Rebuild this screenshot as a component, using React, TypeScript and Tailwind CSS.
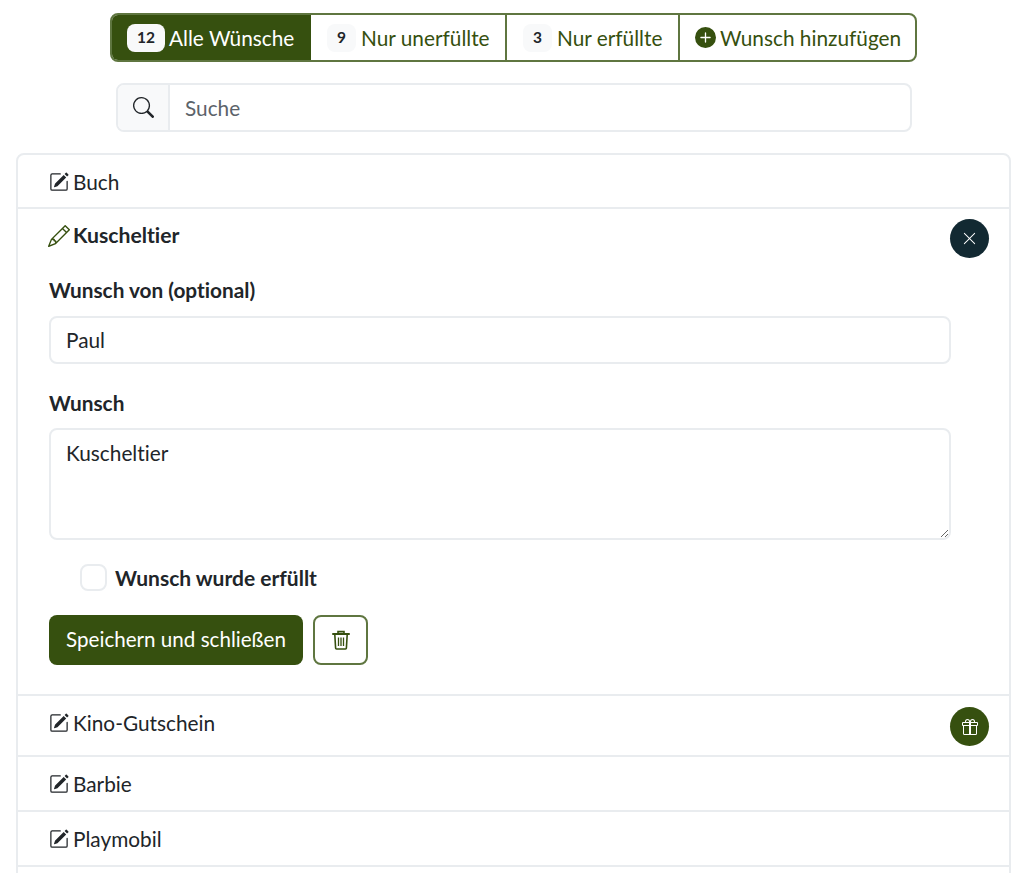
import { BsPencilSquare, BsPencil, BsSearch, BsXLg, BsGift, BsPlusCircleFill } from "react-icons/bs";

const green = "text-[#36500f]";
const tabLine = "border-r-2 border-[#5f7640]";

function Badge({ value, active }: { value: string; active?: boolean }) {
    return (
        <span className={`flex h-[28px] items-center justify-center rounded-lg bg-[#f8f9fa] text-[15.5px] font-bold text-[#212529] ${active ? "w-[38px]" : "w-[29px]"}`}>
            {value}
        </span>
    );
}

function TrashIcon() {
    return (
        <svg viewBox="0 0 18 20" className="h-[20px] w-[18px]" fill="none" stroke="currentColor" strokeWidth="1.6">
            <path d="M1 4h16" strokeWidth="2" strokeLinecap="round" />
            <path d="M6 3.5V1.6h6v1.9" />
            <path d="M2.8 4.5 3.6 18a1 1 0 0 0 1 1h8.8a1 1 0 0 0 1-1l.8-13.5" />
            <path d="M6.5 7.5v8.5M9 7.5v8.5M11.5 7.5v8.5" strokeWidth="1.3" />
        </svg>
    );
}

function Tabs() {
    return (
        <div className="ml-[110px] flex h-[49px] w-[807px] overflow-hidden rounded-lg border-2 border-[#5f7640] text-[20.8px]">
            <div className="flex w-[199px] items-center gap-[4px] bg-[#36500f] pl-[15px] text-white">
                <Badge value="12" active />
                <span>Alle Wünsche</span>
            </div>
            <div className={`flex w-[196px] items-center gap-[5px] pl-[16px] ${tabLine} ${green}`}>
                <Badge value="9" />
                <span>Nur unerfüllte</span>
            </div>
            <div className={`flex w-[173px] items-center gap-[5px] pl-[16px] ${tabLine} ${green}`}>
                <Badge value="3" />
                <span>Nur erfüllte</span>
            </div>
            <div className={`flex flex-1 items-center gap-[4px] pl-[15px] ${green}`}>
                <BsPlusCircleFill className="h-[21px] w-[21px]" />
                <span>Wunsch hinzufügen</span>
            </div>
        </div>
    );
}

function SearchBar() {
    return (
        <div className="mt-[21px] ml-[116px] flex h-[49px] w-[796px] rounded-lg border-2 border-[#e9ecef]">
            <div className="flex w-[52px] items-center justify-center rounded-l-md border-r-2 border-[#e9ecef] bg-[#f8f9fa] text-[#212529]">
                <BsSearch className="h-[21px] w-[21px]" />
            </div>
            <div className="flex flex-1 items-center pl-[15px] text-[#5c636a]">Suche</div>
        </div>
    );
}

function Row({ label, gift, height }: { label: string; gift?: boolean; height: string }) {
    return (
        <div className={`flex items-start justify-between border-b-2 border-[#e9ecef] pr-[20px] pl-[31px] ${height}`}>
            <div className="flex h-[54px] items-center gap-[4px]">
                <BsPencilSquare className="h-[20px] w-[20px]" />
                <span>{label}</span>
            </div>
            {gift && (
                <div className="mt-[11px] flex h-[39px] w-[39px] items-center justify-center rounded-full bg-[#36500f] text-white">
                    <BsGift className="h-[16px] w-[16px]" />
                </div>
            )}
        </div>
    );
}

function Editor() {
    return (
        <div className="h-[487px] border-b-2 border-[#e9ecef] pr-[20px] pl-[31px]">
            <div className="flex items-start justify-between">
                <div className="flex h-[53px] items-center gap-[3px] text-[21.2px] font-bold">
                    <BsPencil className={`-ml-[1px] h-[22px] w-[22px] ${green}`} />
                    <span>Kuscheltier</span>
                </div>
                <div className="mt-[10px] flex h-[39px] w-[39px] items-center justify-center rounded-full bg-[#122932] text-white">
                    <BsXLg className="h-[15px] w-[15px]" />
                </div>
            </div>
            <div className="mt-[12px] w-[902px]">
                <div className="h-[31px] leading-[31px] font-bold">Wunsch von (optional)</div>
                <div className="mt-[11px] flex h-[48px] items-center rounded-lg border-2 border-[#e9ecef] pl-[15px]">Paul</div>
                <div className="mt-[23px] h-[31px] leading-[31px] font-bold">Wunsch</div>
                <textarea
                    readOnly
                    defaultValue="Kuscheltier"
                    className="mt-[10px] block h-[112px] w-full rounded-lg border-2 border-[#e9ecef] px-[15px] py-[7px] outline-none"
                />
                <div className="mt-[22px] flex items-center gap-[8px] pl-[31px]">
                    <span className="h-[27px] w-[27px] rounded-lg border-2 border-[#e9ecef]" />
                    <span className="text-[21px] font-bold">Wunsch wurde erfüllt</span>
                </div>
                <div className="mt-[21px] flex gap-[10px]">
                    <div className="flex h-[50px] w-[254px] items-center justify-center rounded-lg bg-[#36500f] text-[20.6px] text-white">Speichern und schließen</div>
                    <div className={`flex h-[50px] w-[55px] items-center justify-center rounded-lg border-2 border-[#5f7640] ${green}`}>
                        <TrashIcon />
                    </div>
                </div>
            </div>
        </div>
    );
}

export default function App() {
    return (
        <div className="h-[873px] overflow-hidden bg-white pt-[13px] font-['Lato','Open_Sans',sans-serif] text-[20.8px] text-[#212529] [font-variant-ligatures:none]">
            <Tabs />
            <SearchBar />
            <div className="mt-[21px] ml-[16px] h-[800px] w-[995px] rounded-t-lg border-2 border-[#e9ecef]">
                <Row label="Buch" height="h-[54px]" />
                <Editor />
                <Row label="Kino-Gutschein" gift height="h-[61px]" />
                <Row label="Barbie" height="h-[55px]" />
                <Row label="Playmobil" height="h-[55px]" />
            </div>
        </div>
    );
}
